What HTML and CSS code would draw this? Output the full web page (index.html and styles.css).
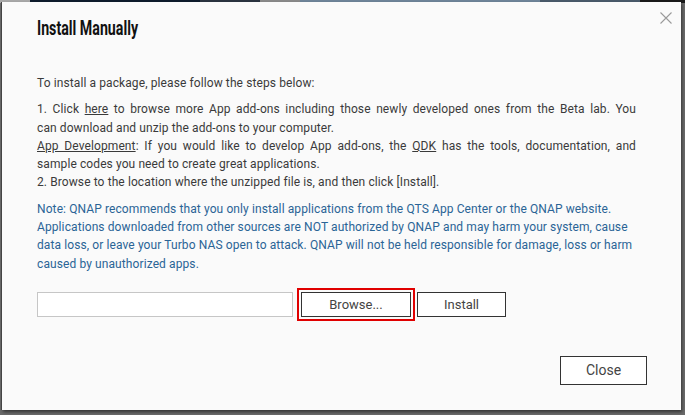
FILE: index.html
```html
<!DOCTYPE html>
<html>
<head>
<meta charset="utf-8">
<link rel="stylesheet" href="styles.css">
</head>
<body>
<div class="backdrop">
  <div class="dialog">
    <button class="close-x" aria-label="Close">
      <svg width="12" height="12" viewBox="0 0 12 12"><path d="M0.5 0.5L11.5 11.5M11.5 0.5L0.5 11.5" stroke="#9a9a9a" stroke-width="1.1" fill="none"/></svg>
    </button>
    <h1 class="title"><span class="title-text">Install Manually</span></h1>
    <p class="intro">To install a package, please follow the steps below:</p>
    <p class="steps">
      <span class="line justify">1. Click <a class="link">here</a> to browse more App add-ons including those newly developed ones from the Beta lab. You</span>
      <span class="line">can download and unzip the add-ons to your computer.</span>
      <span class="line justify"><a class="link">App Development</a>: If you would like to develop App add-ons, the <a class="link">QDK</a> has the tools, documentation, and</span>
      <span class="line">sample codes you need to create great applications.</span>
      <span class="line">2. Browse to the location where the unzipped file is, and then click [Install].</span>
    </p>
    <p class="note">Note: QNAP recommends that you only install applications from the QTS App Center or the QNAP website.<br>Applications downloaded from other sources are NOT authorized by QNAP and may harm your system, cause<br>data loss, or leave your Turbo NAS open to attack. QNAP will not be held responsible for damage, loss or harm<br>caused by unauthorized apps.</p>
    <div class="file-row">
      <div class="file-input"></div>
      <button class="btn btn-browse">Browse...</button>
      <button class="btn btn-install">Install</button>
    </div>
    <div class="footer">
      <button class="btn btn-close">Close</button>
    </div>
  </div>
</div>
</body>
</html>
```

FILE: styles.css
```css
html, body {
  margin: 0;
  padding: 0;
}
body {
  width: 685px;
  height: 415px;
  overflow: hidden;
  background:
    linear-gradient(to right, #a9a9a9 0 30px, #0e1b2c 30px 200px, #2b3440 200px 260px, #8a8a8a 260px 300px, #6f8499 300px 540px, #4a5a6a 540px 640px, #1a1a1a 640px 685px) top left / 685px 3px no-repeat,
    #6a6a6a;
  font-family: Roboto, "Liberation Sans", sans-serif;
}
.backdrop {
  padding: 2px 0 0 2px;
}
.dialog {
  position: relative;
  box-sizing: border-box;
  width: 679px;
  height: 408px;
  background: #fafafa;
  padding: 14px 34px 0 35px;
  display: flex;
  flex-direction: column;
  box-shadow: -1px 0 0 #444, 1px 2px 3px rgba(0,0,0,0.5);
}
.close-x {
  position: absolute;
  top: 10px;
  right: 9px;
  border: 0;
  padding: 0;
  background: none;
  width: 12px;
  height: 12px;
}
.close-x svg { display: block; }
.title {
  margin: 0;
  font-size: 20px;
  line-height: 24px;
  font-weight: 700;
  color: #111;
}
.title-text {
  display: inline-block;
  transform: scaleX(0.71);
  transform-origin: left center;
  white-space: nowrap;
}
p {
  margin: 0;
  font-size: 12px;
  line-height: 18.3px;
  color: #3a3a3a;
  letter-spacing: 0.1px;
  white-space: nowrap;
}
.intro {
  margin-top: 34px;
}
.steps {
  margin-top: 8px;
  width: 599px;
}
.line {
  display: block;
}
.line.justify {
  text-align: justify;
  text-align-last: justify;
}
.link {
  color: inherit;
  text-decoration: underline;
}
.note {
  margin-top: 8px;
  color: #2a6496;
}
.file-row {
  display: flex;
  align-items: center;
  margin-top: 19px;
}
.file-input {
  box-sizing: border-box;
  width: 256px;
  height: 25px;
  background: #fff;
  border: 1px solid #c6c6c6;
}
.btn {
  box-sizing: border-box;
  border: 1px solid #333;
  background: #fff;
  color: #444;
  font-family: Roboto, "Liberation Sans", sans-serif;
  font-size: 13px;
  padding: 0;
}
.btn-browse {
  width: 110px;
  height: 25px;
  margin-left: 8px;
  outline: 2px solid #e00000;
  outline-offset: 2px;
}
.btn-install {
  width: 89px;
  height: 25px;
  margin-left: 6px;
}
.footer {
  display: flex;
  justify-content: flex-end;
  margin-top: 39px;
}
.btn-close {
  width: 87px;
  height: 29px;
  font-size: 14px;
}
```
